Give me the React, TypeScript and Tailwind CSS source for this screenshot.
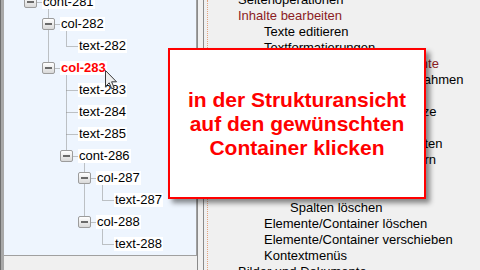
import React from "react";

type Node = { label: string; level: number; toggle: boolean; active?: boolean };

const nodes: Node[] = [
  { label: "cont-281", level: 0, toggle: true },
  { label: "col-282", level: 1, toggle: true },
  { label: "text-282", level: 2, toggle: false },
  { label: "col-283", level: 1, toggle: true, active: true },
  { label: "text-283", level: 2, toggle: false },
  { label: "text-284", level: 2, toggle: false },
  { label: "text-285", level: 2, toggle: false },
  { label: "cont-286", level: 2, toggle: true },
  { label: "col-287", level: 3, toggle: true },
  { label: "text-287", level: 4, toggle: false },
  { label: "col-288", level: 3, toggle: true },
  { label: "text-288", level: 4, toggle: false },
];

const levelPad = ["pl-[20px]", "pl-[38px]", "pl-[56px]", "pl-[74px]", "pl-[92px]"];

const groups: { parent: number; last: number }[] = [
  { parent: 0, last: 3 },
  { parent: 1, last: 2 },
  { parent: 3, last: 7 },
  { parent: 7, last: 10 },
  { parent: 8, last: 9 },
  { parent: 10, last: 11 },
];

type Line = { text: string; level: 1 | 2 | 3; red?: boolean };

const lines: Line[] = [
  { text: "Seitenoperationen", level: 1 },
  { text: "Inhalte bearbeiten", level: 1, red: true },
  { text: "Texte editieren", level: 2 },
  { text: "Textformatierungen", level: 2 },
  { text: "Neue Container und Elemente", level: 2, red: true },
  { text: "Container mit Hintergrundsrahmen", level: 2 },
  { text: "Spalten anlegen", level: 3 },
  { text: "Spalten für Texte und Absätze", level: 2 },
  { text: "Spalten einfügen", level: 3 },
  { text: "Abstand zwischen Spalten", level: 3 },
  { text: "Spaltenbreiten verändern", level: 3 },
  { text: "Spalten verschieben", level: 3 },
  { text: "Spalten hinzufügen", level: 3 },
  { text: "Spalten löschen", level: 3 },
  { text: "Elemente/Container löschen", level: 2 },
  { text: "Elemente/Container verschieben", level: 2 },
  { text: "Kontextmenüs", level: 2 },
  { text: "Bilder und Dokumente", level: 1 },
];

const linePad = { 1: "pl-[30px]", 2: "pl-[56px]", 3: "pl-[82px]" } as const;

function Toggle() {
  return (
    <div className="w-[13px] h-[12px] shrink-0 rounded-[2px] border border-[#9c9c9c] bg-gradient-to-b from-[#ffffff] to-[#d9d9d9] flex items-center justify-center">
      <div className="w-[7px] h-[2px] bg-[#6a6a6a]" />
    </div>
  );
}

function TreeLines() {
  const cy = (i: number) => 2 + 22 * i + 0.5;
  const segs: React.ReactNode[] = [];
  groups.forEach((g, k) => {
    const L = nodes[g.parent].level;
    const x = 26.5 + 18 * (L + 1);
    segs.push(<line key={"v" + k} x1={x} y1={cy(g.parent)} x2={x} y2={cy(g.last)} />);
  });
  nodes.forEach((n, i) => {
    const x1 = 26.5 + 18 * n.level;
    const x2 = 38 + 18 * n.level;
    segs.push(<line key={"h" + i} x1={x1} y1={cy(i)} x2={x2} y2={cy(i)} />);
  });
  return (
    <svg className="absolute left-0 top-0" width="192" height="256" stroke="#8a8a8a" strokeWidth="1" strokeDasharray="1 1">
      {segs}
    </svg>
  );
}

export default function App() {
  return (
    <div className="w-[480px] h-[270px] relative overflow-hidden bg-[#f0f0f0] flex font-['Liberation_Sans',Arial,sans-serif]">
      <div className="w-[4px] h-full border-l border-[#6e6e6e] bg-[#a8a8a8]" />
      <div className="w-[194px] h-full flex flex-col border-r border-[#8a8a8a]">
        <div className="h-[256px] relative overflow-hidden bg-[#eef5fe] border-r border-b border-[#a0a0a0]">
          <TreeLines />
          <div className="relative flex flex-col -mt-[9px]">
            {nodes.map((n) => (
              <div key={n.label} className={"h-[22px] flex items-center gap-[5px] " + levelPad[n.level]}>
                {n.toggle ? <Toggle /> : <div className="w-[13px] shrink-0" />}
                <span
                  className={
                    "h-[14px] leading-[14px] px-[1px] bg-white text-[13px] whitespace-nowrap " +
                    (n.active ? "text-[#ff0000] font-bold" : "text-[#000000]")
                  }
                >
                  {n.label}
                </span>
              </div>
            ))}
          </div>
        </div>
        <div className="flex-1" />
      </div>
      <div className="w-[5px]" />
      <div className="w-[1px] h-full bg-[#8a8a8a]" />
      <div className="w-[3px]" />
      <div className="h-full border-l border-dotted border-[#e2a37f]" />
      <div className="flex-1 h-full overflow-hidden">
        <div className="flex flex-col -mt-[8px]">
          {lines.map((l) => (
            <div
              key={l.text}
              className={
                "h-[16px] leading-[16px] text-[13px] whitespace-nowrap " +
                linePad[l.level] +
                (l.red ? " text-[#8b1c24]" : " text-[#000000]")
              }
            >
              {l.text}
            </div>
          ))}
        </div>
      </div>

      <svg className="absolute left-[104px] top-[69px]" width="14" height="22" viewBox="0 0 14 22">
        <path
          d="M1.5 1.5 L1.5 17.5 L5.2 13.8 L7.8 19.8 L10.2 18.8 L7.6 12.8 L12.5 12.8 Z"
          fill="#ececec"
          fillOpacity="0.85"
          stroke="#3a3a3a"
          strokeWidth="1"
          strokeLinejoin="miter"
        />
      </svg>

      <div className="absolute left-[168px] top-[48px] w-[258px] h-[151px] bg-white border-2 border-[#ff0000] shadow-[4px_4px_5px_rgba(0,0,0,0.45)] flex items-center justify-center">
        <div className="text-center text-[#ff0000] font-bold text-[21px] leading-[24px] font-['Liberation_Sans',Arial,sans-serif]">
          <div>in der Strukturansicht</div>
          <div>auf den gewünschten</div>
          <div>Container klicken</div>
        </div>
      </div>
    </div>
  );
}
